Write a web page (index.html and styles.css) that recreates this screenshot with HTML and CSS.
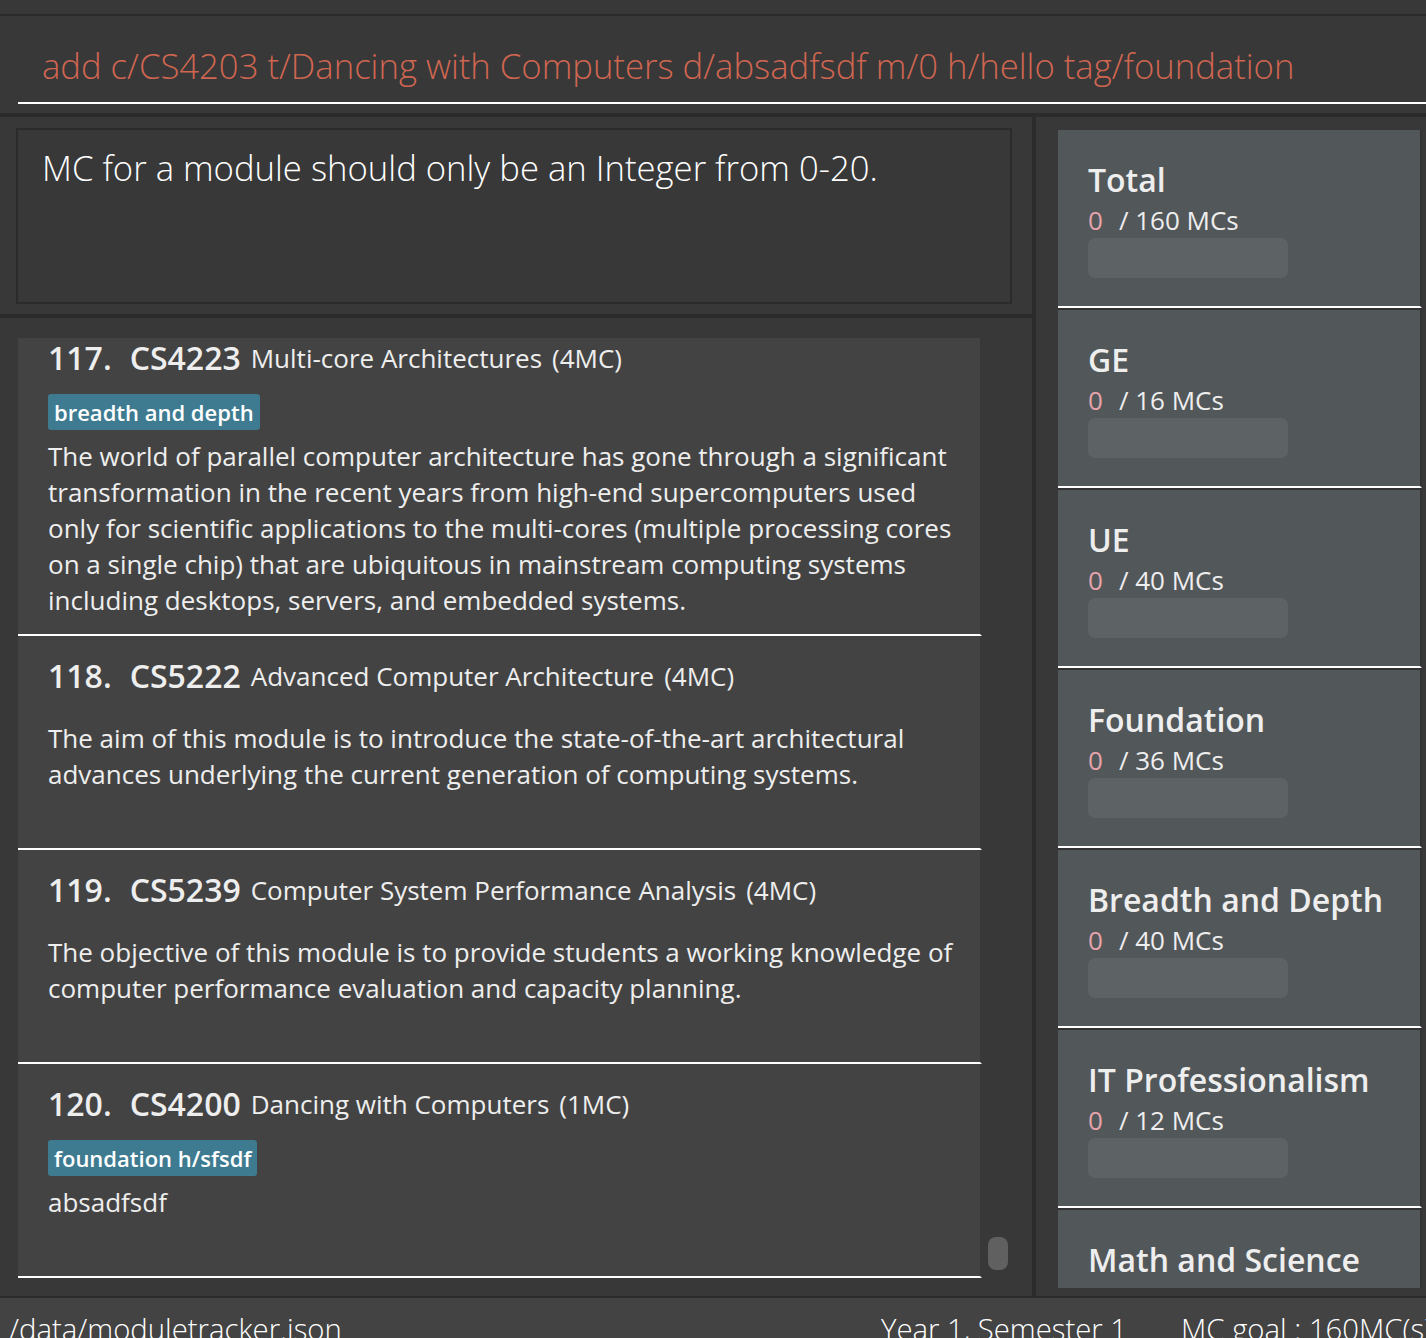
FILE: index.html
```html
<!DOCTYPE html>
<html lang="en">
<head>
<meta charset="utf-8">
<title>Module Tracker</title>
<link rel="stylesheet" href="styles.css">
</head>
<body>
<div class="app">
  <div class="menubar"></div>
  <div class="command-pane">
    <div class="command-field error">add c/CS4203 t/Dancing with Computers d/absadfsdf m/0 h/hello tag/foundation</div>
  </div>
  <div class="main">
    <div class="left-col">
      <div class="result-pane">
        <div class="result-box">MC for a module should only be an Integer from 0-20.</div>
      </div>
      <div class="list-pane">
        <div class="list-viewport">
          <div class="list-content">
            <div class="module-card">
              <div class="card-title">
                <span class="card-id">117.</span>
                <span class="card-code">CS4223</span>
                <span class="card-name">Multi-core Architectures</span>
                <span class="card-mc">(4MC)</span>
              </div>
              <div class="tags"><span class="tag">breadth and depth</span></div>
              <div class="card-desc">The world of parallel computer architecture has gone through a significant transformation in the recent years from high-end supercomputers used only for scientific applications to the multi-cores (multiple processing cores on a single chip) that are ubiquitous in mainstream computing systems including desktops, servers, and embedded systems.</div>
            </div>
            <div class="module-card">
              <div class="card-title">
                <span class="card-id">118.</span>
                <span class="card-code">CS5222</span>
                <span class="card-name">Advanced Computer Architecture</span>
                <span class="card-mc">(4MC)</span>
              </div>
              <div class="tags"></div>
              <div class="card-desc">The aim of this module is to introduce the state-of-the-art architectural advances underlying the current generation of computing systems.</div>
            </div>
            <div class="module-card">
              <div class="card-title">
                <span class="card-id">119.</span>
                <span class="card-code">CS5239</span>
                <span class="card-name">Computer System Performance Analysis</span>
                <span class="card-mc">(4MC)</span>
              </div>
              <div class="tags"></div>
              <div class="card-desc">The objective of this module is to provide students a working knowledge of computer performance evaluation and capacity planning.</div>
            </div>
            <div class="module-card">
              <div class="card-title">
                <span class="card-id">120.</span>
                <span class="card-code">CS4200</span>
                <span class="card-name">Dancing with Computers</span>
                <span class="card-mc">(1MC)</span>
              </div>
              <div class="tags"><span class="tag">foundation h/sfsdf</span></div>
              <div class="card-desc">absadfsdf</div>
            </div>
          </div>
        </div>
        <div class="scroll-thumb"></div>
      </div>
    </div>
    <div class="right-col">
      <div class="req-viewport">
        <div class="req-card">
          <div class="req-title">Total</div>
          <div class="req-mc"><span class="req-done">0</span><span>/ 160 MCs</span></div>
          <div class="req-bar"></div>
        </div>
        <div class="req-card">
          <div class="req-title">GE</div>
          <div class="req-mc"><span class="req-done">0</span><span>/ 16 MCs</span></div>
          <div class="req-bar"></div>
        </div>
        <div class="req-card">
          <div class="req-title">UE</div>
          <div class="req-mc"><span class="req-done">0</span><span>/ 40 MCs</span></div>
          <div class="req-bar"></div>
        </div>
        <div class="req-card">
          <div class="req-title">Foundation</div>
          <div class="req-mc"><span class="req-done">0</span><span>/ 36 MCs</span></div>
          <div class="req-bar"></div>
        </div>
        <div class="req-card">
          <div class="req-title">Breadth and Depth</div>
          <div class="req-mc"><span class="req-done">0</span><span>/ 40 MCs</span></div>
          <div class="req-bar"></div>
        </div>
        <div class="req-card">
          <div class="req-title">IT Professionalism</div>
          <div class="req-mc"><span class="req-done">0</span><span>/ 12 MCs</span></div>
          <div class="req-bar"></div>
        </div>
        <div class="req-card">
          <div class="req-title">Math and Science</div>
          <div class="req-mc"><span class="req-done">0</span><span>/ 16 MCs</span></div>
          <div class="req-bar"></div>
        </div>
      </div>
    </div>
  </div>
  <div class="status-bar">
    <span class="status-path">/data/moduletracker.json</span>
    <span class="status-sem">Year 1, Semester 1</span>
    <span class="status-goal">MC goal : 160MC(s)</span>
  </div>
</div>
</body>
</html>
```
FILE: styles.css
```css
html, body {
  margin: 0;
  padding: 0;
}
body {
  background: #383838;
  width: 1426px;
  height: 1338px;
  overflow: hidden;
  font-family: "Open Sans", "Noto Sans", sans-serif;
  color: #eeeeee;
}
.app {
  display: flex;
  flex-direction: column;
  height: 1338px;
}
.menubar {
  height: 14px;
  border-bottom: 2px solid #2b2b2b;
  flex: none;
}
.command-pane {
  flex: none;
  padding: 0 0 9px 18px;
  border-bottom: 4px solid #2b2b2b;
}
.command-field {
  height: 48px;
  padding: 26px 0 12px 24px;
  border-bottom: 2px solid #ffffff;
  font-size: 34.67px;
  font-weight: 300;
  line-height: 48px;
  white-space: nowrap;
  color: #ffffff;
}
.command-field.error {
  color: #d06651;
}
.main {
  flex: none;
  height: 1179px;
  display: flex;
  border-bottom: 2px solid #2b2b2b;
}
.left-col {
  width: 1032px;
  border-right: 4px solid #2b2b2b;
  display: flex;
  flex-direction: column;
}
.result-pane {
  flex: none;
  padding: 11px 20px 10px 16px;
  border-bottom: 4px solid #2b2b2b;
}
.result-box {
  height: 158px;
  border: 2px solid #2b2b2b;
  padding: 14px 0 0 24px;
  font-size: 34.67px;
  font-weight: 300;
  line-height: 48px;
  color: #ffffff;
}
.list-pane {
  position: relative;
  flex: 1;
  padding: 20px 0 0 18px;
  min-height: 0;
  display: flex;
  flex-direction: column;
}
.list-viewport {
  flex: 1;
  overflow: hidden;
}
.list-content {
  margin-top: -20px;
  width: 964px;
}
.module-card {
  box-sizing: border-box;
  min-height: 214px;
  padding: 18px 20px 16px 30px;
  background: #434343;
  background-clip: padding-box;
  border-right: 2px solid transparent;
  border-bottom: 2px solid #ffffff;
}
.card-title {
  display: flex;
  align-items: center;
  gap: 10px;
  height: 44px;
  line-height: 44px;
  white-space: nowrap;
}
.card-id, .card-code {
  font-size: 32px;
  font-weight: 600;
  line-height: 44px;
  color: #eeeeee;
}
.card-id {
  padding-right: 8px;
}
.card-name, .card-mc {
  font-size: 26px;
  line-height: 36px;
  color: #eeeeee;
}
.tags {
  display: flex;
  gap: 8px;
  margin: 14px 0 8px;
}
.tag {
  background: #3e7b91;
  color: #ffffff;
  font-size: 22px;
  font-weight: 600;
  line-height: 36px;
  padding: 0 6px;
  border-radius: 3px;
}
.card-desc {
  font-size: 26px;
  line-height: 36px;
  color: #eeeeee;
}
.scroll-thumb {
  position: absolute;
  left: 988px;
  top: 919px;
  width: 20px;
  height: 33px;
  border-radius: 8px;
  background: #606060;
}
.right-col {
  flex: 1;
  padding: 13px 4px 8px 22px;
  display: flex;
  flex-direction: column;
}
.req-viewport {
  flex: 1;
  overflow: hidden;
  background: #323232;
}
.req-card {
  box-sizing: border-box;
  height: 178px;
  padding: 28px 30px 0;
  margin-bottom: 2px;
  background: #52575a;
  background-clip: padding-box;
  border-right: 2px solid transparent;
  border-bottom: 2px solid #ffffff;
}
.req-title {
  font-size: 32px;
  font-weight: 600;
  line-height: 44px;
  color: #eeeeee;
  white-space: nowrap;
}
.req-mc {
  display: flex;
  gap: 16px;
  font-size: 26px;
  line-height: 36px;
  color: #eeeeee;
}
.req-done {
  color: #e6a3ab;
}
.req-bar {
  width: 200px;
  height: 40px;
  border-radius: 7px;
  background: #5d6265;
}
.status-bar {
  flex: 1;
  display: flex;
  background: #434343;
  padding: 11px 0 0 9px;
  font-size: 29.3px;
  font-weight: 300;
  line-height: 40px;
  color: #ffffff;
  white-space: nowrap;
  overflow: hidden;
}
.status-path {
  flex: 0 0 872px;
}
.status-sem {
  flex: none;
}
.status-goal {
  flex: none;
  margin-left: 54px;
}
```
